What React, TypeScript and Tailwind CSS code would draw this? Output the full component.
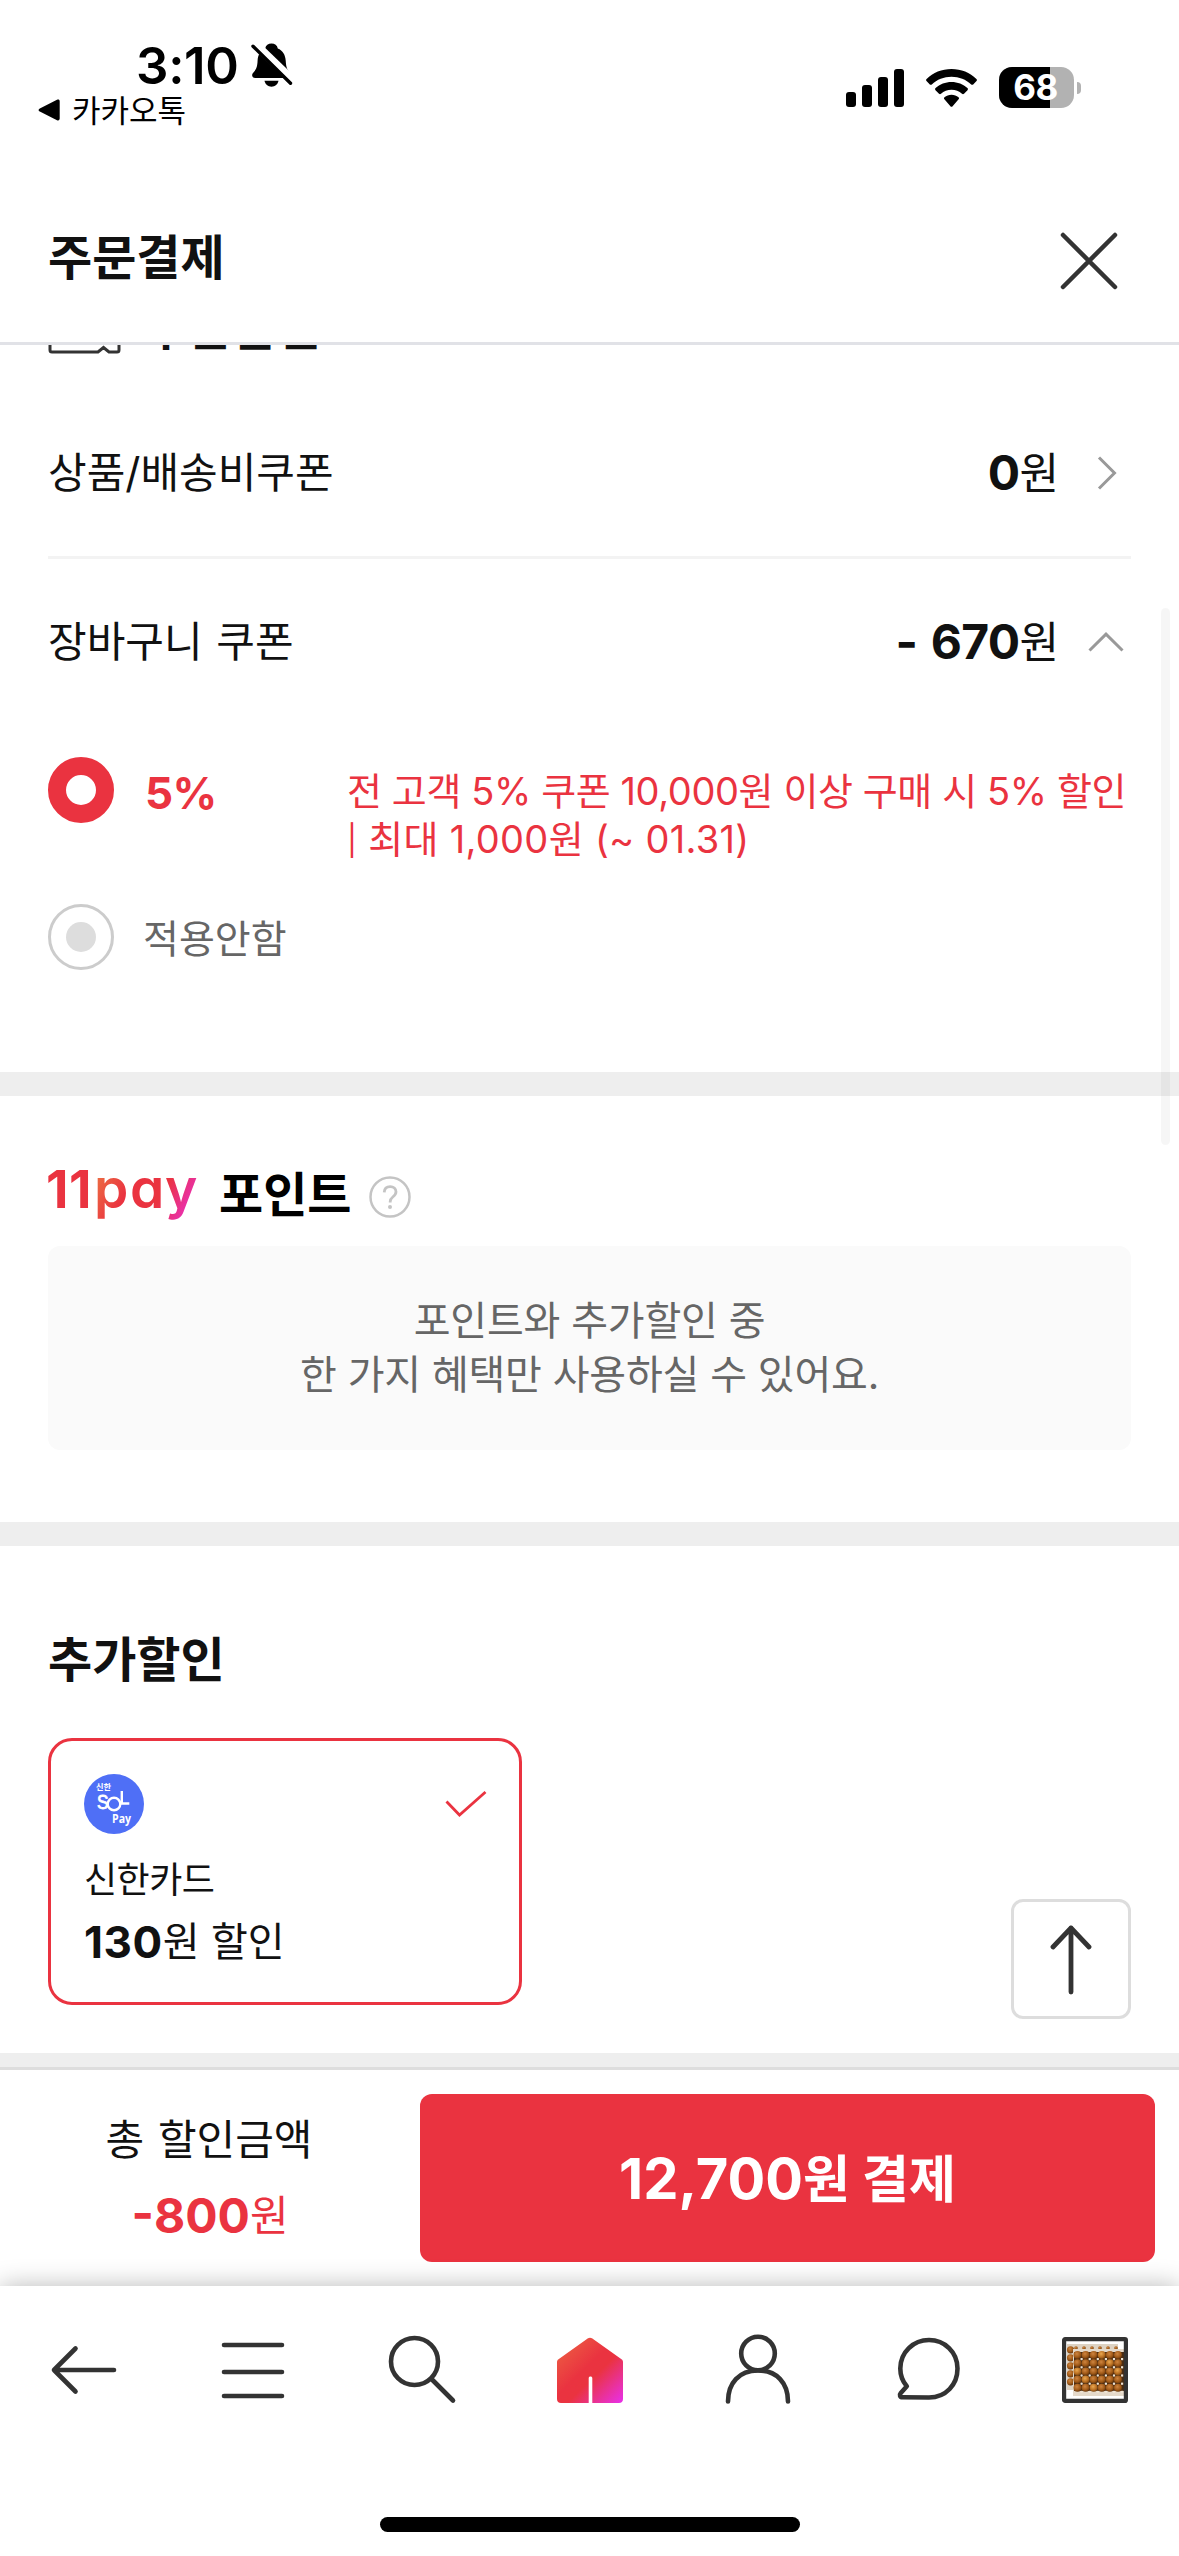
import { ReactNode } from 'react';

const BRAND = '#ea3340';
const INK = '#333333';

function StatusBar() {
  return (
    <div className="flex h-[172px] items-start justify-between pl-[38px] pr-[98px] text-black">
      <div>
        <div className="mt-[39px] flex h-[52px] items-center gap-[12px] pl-[98px]">
          <span className="text-[51px] font-semibold leading-none tracking-[-0.300px]">3:10</span>
          <svg width="42" height="44" viewBox="0 0 42 44">
            <path
              d="M20.5 0.5c3.3 0 5.7 1.9 6.3 4.9 5 2 7.600 6.500 7.900 12.200.4 7.400 1.800 9.600 4.600 12.700 1.700 2 .8 4.700-2 4.700H4.300c-3 0-4.100-2.700-2.300-4.900 2.900-3.300 4.300-5.300 4.600-12.500C6.900 11.800 9.400 7.300 14.200 5.400c.6-3 3-4.900 6.300-4.900z"
              fill="#000"
            />
            <path d="M13.500 37.800h14c-.7 3.600-3.500 5.900-7 5.900s-6.300-2.300-7-5.900z" fill="#000" />
            <path d="M3.500 0.500 43 38.500" stroke="#fff" strokeWidth="8.500" />
            <path d="M2 3.200 39.500 40.200" stroke="#000" strokeWidth="3.400" strokeLinecap="round" />
          </svg>
        </div>
        <div className="flex h-[38px] items-center gap-[11px]">
          <svg width="23" height="22" viewBox="0 0 23 22">
            <path d="M1.800 9.400 19 .8c1.600-.6 2.700 0 2.700 1.600v17.200c0 1.600-1.100 2.200-2.700 1.600L1.800 12.600c-1.600-.8-1.600-2.400 0-3.200z" fill="#000" />
          </svg>
          <span className="text-[31px] leading-none">카카오톡</span>
        </div>
      </div>

      <div className="mt-[67px] flex h-[41px] items-center">
        <svg width="59" height="38" viewBox="0 0 59 38" className="mr-[21px]">
          <rect x="0" y="23" width="10" height="15" rx="3" />
          <rect x="16" y="16" width="10" height="22" rx="3" />
          <rect x="32" y="8" width="10" height="30" rx="3" />
          <rect x="48" y="0" width="10" height="38" rx="3" />
        </svg>
        <svg width="51" height="38" viewBox="0 0 51 38" className="mr-[22px]">
          <path d="M25.500 0C35.200 0 44 3.700 50.400 9.900c.7.7.7 1.500.1 2.100L47.200 15.400c-.6.6-1.400.6-2 0C40 10.500 33.100 7.700 25.500 7.700S11 10.500 5.800 15.400c-.6.6-1.400.6-2 0L.5 12c-.6-.6-.6-1.400.1-2.100C7 3.700 15.800 0 25.500 0z" />
          <path d="M25.500 13c6.100 0 11.700 2.300 15.900 6.100.7.6.7 1.500.1 2.100l-3.500 3.500c-.6.6-1.300.6-2 .1-2.800-2.500-6.500-4-10.500-4s-7.700 1.500-10.500 4c-.7.5-1.400.5-2-.1l-3.500-3.500c-.6-.6-.6-1.500.1-2.100C13.800 15.300 19.400 13 25.500 13z" />
          <path d="M25.500 25.800c2.700 0 5.100.9 7 2.500.7.6.7 1.400.1 2l-6 6.900c-.6.7-1.600.7-2.200 0l-6-6.900c-.6-.6-.6-1.400.1-2 1.900-1.600 4.300-2.500 7-2.500z" />
        </svg>
        <div className="relative h-[41px] w-[75px] overflow-hidden rounded-[13px] bg-[#b2b2b2]">
          <div className="h-full w-[51px] bg-black" />
          <span className="absolute inset-0 flex items-center justify-center pr-[2px] text-[35px] font-bold leading-none tracking-[-0.5px] text-white">68</span>
        </div>
        <div className="ml-[3px] h-[12px] w-[4px] rounded-r-full bg-[#b2b2b2]" />
      </div>
    </div>
  );
}

function Header() {
  return (
    <header className="flex h-[173px] items-center justify-between border-b-[3px] border-[#e1e2e7] pl-[48px] pr-[61px]">
      <h1 className="pt-[2px] text-[48px] font-bold leading-none">주문결제</h1>
      <svg width="58" height="58" viewBox="0 0 58 58" className="mt-[8px]">
        <path d="M3 3 55 55M55 3 3 55" stroke={INK} strokeWidth="4.500" strokeLinecap="round" />
      </svg>
    </header>
  );
}

function CouponRow({ label, amount, children }: { label: string; amount: string; children: ReactNode }) {
  return (
    <div className="flex h-[166px] items-center">
      <span className="flex-1 text-[42px] leading-none [word-spacing:2px]">{label}</span>
      <span className="flex items-center leading-none">
        <b className="whitespace-pre text-[48px] font-bold tracking-[-0.700px] [word-spacing:3px]">{amount}</b>
        <span className="text-[43px]">원</span>
      </span>
      <span className="flex w-[72px] items-center justify-center pl-[24px]">{children}</span>
    </div>
  );
}

function CouponSection() {
  return (
    <section className="h-[727px] overflow-hidden px-[48px]">
      <div className="-mt-[42px] flex h-[48px] items-center">
        <svg width="73" height="52" viewBox="0 0 73 52" className="mr-[23px] mt-[4px]">
          <path
            d="M4 2h46l5 5 5-5h9c1.200 0 2 .8 2 2v43c0 1.200-.8 2-2 2h-8l-5.500-4.500L50 49H4c-1.200 0-2-.8-2-2V4c0-1.200.8-2 2-2z"
            fill="none"
            stroke={INK}
            strokeWidth="3"
          />
        </svg>
        <h2 className="pt-[1px] text-[48px] font-bold leading-none">쿠폰할인</h2>
      </div>

      <div className="mt-[39px] border-b-[3px] border-[#f3f3f3]">
        <CouponRow label="상품/배송비쿠폰" amount="0">
          <svg width="20" height="34" viewBox="0 0 20 34">
            <path d="M2 1.500 17.500 17 2 32.500" fill="none" stroke="#999" strokeWidth="3" />
          </svg>
        </CouponRow>
      </div>
      <CouponRow label="장바구니 쿠폰" amount="- 670">
        <svg width="36" height="20" viewBox="0 0 36 20" className="-ml-[3px]">
          <path d="M1.500 18.500 18 2.200 34.500 18.500" fill="none" stroke="#999" strokeWidth="3" />
        </svg>
      </CouponRow>

      <div className="mt-[32px] flex h-[66px] items-start text-[#ea3340]">
        <div className="h-[66px] w-[66px] rounded-full border-[18px] border-[#ea3340]" />
        <span className="ml-[31px] mt-[3px] w-[202px] text-[44px] font-bold leading-[66px] tracking-[-0.5px]">5%</span>
        <p className="mt-[10px] whitespace-nowrap text-[38px] leading-[48px] tracking-[-0.4px]">
          전 고객 5% 쿠폰 10,000원 이상 구매 시 5% 할인
          <br />
          <span className="tracking-[0.300px]">
            <span className="align-[2px] text-[30px] leading-none">|</span> 최대 1,000원 (~ 01.31)
          </span>
        </p>
      </div>
      <div className="mt-[81px] flex h-[66px] items-center">
        <div className="flex h-[66px] w-[66px] items-center justify-center rounded-full border-[3px] border-[#ccc]">
          <div className="h-[30px] w-[30px] rounded-full bg-[#ddd]" />
        </div>
        <span className="ml-[29px] mt-[3px] text-[39px] leading-none text-[#666]">적용안함</span>
      </div>
    </section>
  );
}

function PointSection() {
  return (
    <section className="h-[426px] px-[48px] pt-[60px]">
      <div className="mb-[14px] flex h-[76px] items-center">
        <svg width="156" height="60" viewBox="0 0 156 60" className="mr-[15px] overflow-visible" fontFamily="Inter">
          <defs>
            <linearGradient id="pay" gradientUnits="userSpaceOnUse" x1="52" y1="8" x2="148" y2="58">
              <stop offset="0" stopColor="#ec6a42" />
              <stop offset="0.3" stopColor="#ea3340" />
              <stop offset="0.6" stopColor="#ea3340" />
              <stop offset="1" stopColor="#e92fe0" />
            </linearGradient>
          </defs>
          <text x="-2 21" y="44" fontSize="52" fontWeight="700" fill={BRAND}>11</text>
          <text x="46 82 117" y="44" fontSize="55" fontWeight="600" fill="url(#pay)" style={{ fontFeatureSettings: '"cv11"' }}>pay</text>
        </svg>
        <h2 className="pt-[1px] text-[48px] font-bold leading-none text-black">포인트</h2>
        <svg width="42" height="42" viewBox="0 0 42 42" className="ml-[18px] mt-[6px]">
          <circle cx="21" cy="21" r="19.500" fill="none" stroke="#c4c4c4" strokeWidth="2.500" />
          <path d="M15.200 16.300c.2-3.600 2.600-5.700 6-5.700 3.300 0 5.800 2.100 5.800 5.200 0 2.300-1.100 3.600-3.200 5.200-2 1.500-2.600 2.500-2.600 4.700v.8" fill="none" stroke="#c4c4c4" strokeWidth="2.800" />
          <circle cx="21" cy="31" r="2" fill="#c4c4c4" />
        </svg>
      </div>
      <p className="flex h-[204px] items-center justify-center rounded-[12px] bg-[#fafafa] text-center text-[40px] leading-[54px] tracking-[-0.200px] text-[#666]">
        포인트와 추가할인 중
        <br />한 가지 혜택만 사용하실 수 있어요.
      </p>
    </section>
  );
}

function SolPayIcon() {
  return (
    <svg width="60" height="60" viewBox="0 0 60 60" fill="#fff">
      <circle cx="30" cy="30" r="30" fill="#4f6ff6" />
      <text x="12" y="15.500" fontSize="8.500" fontWeight="700" fontFamily="'Noto Sans CJK KR'" textLength="15" lengthAdjust="spacingAndGlyphs">신한</text>
      <text x="13" y="35" fontSize="19.500" stroke="#fff" strokeWidth="0.800" fontFamily="'Liberation Sans'" textLength="11.500" lengthAdjust="spacingAndGlyphs">S</text>
      <circle cx="30" cy="30" r="6.300" fill="none" stroke="#fff" strokeWidth="2.400" />
      <path d="M37.800 17v12.500h7.500" fill="none" stroke="#fff" strokeWidth="2.400" />
      <text x="28" y="48.500" fontSize="12" fontWeight="700" fontFamily="'Open Sans'" textLength="19" lengthAdjust="spacingAndGlyphs">Pay</text>
    </svg>
  );
}

function ExtraDiscountSection() {
  return (
    <section className="h-[507px] px-[48px] pt-[80px]">
      <h2 className="h-[68px] text-[48px] font-bold leading-[68px]">추가할인</h2>
      <div className="mt-[44px] h-[267px] w-[474px] rounded-[24px] border-[3px] border-[#ea3340] pl-[33px] pr-[32px] pt-[33px]">
        <div className="flex items-center justify-between">
          <SolPayIcon />
          <svg width="42" height="28" viewBox="0 0 42 28">
            <path d="M1.500 11.500 14.500 25 40.500 2" fill="none" stroke={BRAND} strokeWidth="2.800" />
          </svg>
        </div>
        <p className="mt-[19px] h-[54px] text-[36px] leading-[54px] tracking-[-0.500px]">신한카드</p>
        <p className="flex h-[70px] items-center leading-[70px]">
          <b className="text-[44px] font-bold tracking-[0.600px]">130</b>
          <span className="text-[40px]">원 할인</span>
        </p>
      </div>
    </section>
  );
}

function PayBar() {
  return (
    <div className="flex h-[219px] items-center border-t-[3px] border-[#ddd] bg-white">
      <div className="w-[420px] pr-[2px] text-center">
        <p className="h-[76px] text-[42px] leading-[75px] [word-spacing:2px]">총 할인금액</p>
        <p className="flex h-[76px] items-center justify-center pl-[2px] leading-[76px] text-[#ea3340]">
          <b className="text-[48px] font-bold">-800</b>
          <span className="text-[42px]">원</span>
        </p>
      </div>
      <button className="flex h-[168px] w-[735px] items-center justify-center rounded-[12px] bg-[#ea3340] pt-[2px] text-[51px] font-bold leading-none text-white">
        <span className="text-[56px]">12,700</span>
        <span className="whitespace-pre">원 결제</span>
      </button>
    </div>
  );
}

function EggTrays() {
  const eggs = [];
  for (let row = 0; row < 5; row++) {
    for (let col = 0; col < 6; col++) {
      eggs.push({ x: 15.5 + col * 8.1, y: 18 + row * 8.2, light: (row * 3 + col * 2) % 5 === 1 });
    }
  }
  return (
    <svg width="66" height="66" viewBox="0 0 66 66">
      <defs>
        <radialGradient id="egg" cx="0.42" cy="0.35" r="0.7">
          <stop offset="0" stopColor="#cf8540" />
          <stop offset="0.6" stopColor="#a05a18" />
          <stop offset="1" stopColor="#5e300a" />
        </radialGradient>
        <radialGradient id="eggLight" cx="0.42" cy="0.35" r="0.7">
          <stop offset="0" stopColor="#eaa850" />
          <stop offset="0.6" stopColor="#b96f22" />
          <stop offset="1" stopColor="#70400f" />
        </radialGradient>
      </defs>
      <rect x="2" y="2" width="62" height="62" fill="#fff" />
      <rect x="5" y="7" width="51" height="46" fill="#ddd2c2" />
      {[12, 20, 28, 36, 44].map((y) => (
        <circle key={y} cx="8.500" cy={y + 0.8} r="3.600" fill="url(#egg)" />
      ))}
      {[14, 22, 30, 38, 46, 54].map((x) => (
        <circle key={x} cx={x} cy="11" r="1.800" fill="url(#egg)" />
      ))}
      <rect x="11" y="12" width="52" height="47" fill="#e4d9ca" />
      <rect x="12" y="15" width="50" height="39" fill="#4a2d14" />
      {eggs.map((e, i) => (
        <rect key={i} x={e.x + 3} y={e.y + 3} width="2.200" height="2.200" fill="#eee3d3" />
      ))}
      {eggs.map((e, i) => (
        <circle key={i} cx={e.x} cy={e.y} r="4" fill={e.light ? 'url(#eggLight)' : 'url(#egg)'} />
      ))}
      <rect x="2.100" y="2.100" width="61.800" height="61.800" rx="1" fill="none" stroke={INK} strokeWidth="4.200" />
    </svg>
  );
}

function NavIcon({ children }: { children: ReactNode }) {
  return (
    <svg width="66" height="66" viewBox="0 0 66 66" fill="none" stroke={INK} strokeWidth="4.600" strokeLinecap="round" strokeLinejoin="round" className="overflow-visible">
      {children}
    </svg>
  );
}

function BottomNav() {
  return (
    <nav className="relative h-[270px] bg-white shadow-[0_0_24px_rgba(0,0,0,0.28)]">
      <div className="flex justify-between px-[51px] pt-[51px]">
        <NavIcon>
          <path d="M63 33H3M24.500 11.500 3 33l21.500 21.500" />
        </NavIcon>
        <NavIcon>
          <path d="M4 8h58M4 35h58M4 59h58" />
        </NavIcon>
        <NavIcon>
          <circle cx="26.500" cy="24.500" r="23.500" />
          <path d="M43.500 42 65 63.500" />
        </NavIcon>
        <NavIcon>
          <defs>
            <linearGradient id="home" gradientUnits="userSpaceOnUse" x1="6" y1="8" x2="62" y2="66">
              <stop offset="0" stopColor="#ec5a42" />
              <stop offset="0.4" stopColor="#ea3340" />
              <stop offset="0.550" stopColor="#ea3340" />
              <stop offset="1" stopColor="#e830e0" />
            </linearGradient>
          </defs>
          <path
            d="M31 1.300c1.200-.7 2.800-.7 4 0l29.500 21c1 .7 1.500 1.700 1.500 2.900V62c0 2.500-1.500 4-4 4H35.300V41c0-1-.8-1.600-1.800-1.600s-1.800.6-1.800 1.600v25H4c-2.500 0-4-1.500-4-4V25.200c0-1.200.5-2.200 1.500-2.900z"
            fill="url(#home)"
            stroke="none"
          />
        </NavIcon>
        <NavIcon>
          <circle cx="33" cy="16.500" r="16.800" />
          <path d="M3 64.500C3 46 14 33.500 33 33.500S63 46 63 64.500" />
        </NavIcon>
        <NavIcon>
          <path d="M35 60.500c17 0 28.500-13 28.500-29C63.500 15 50.500 3 35 3S6.300 15 6.300 31.500c0 7 2.400 13 6.500 17.800L6.800 56c-1.700 2-.8 4.300 1.700 4.300z" />
        </NavIcon>
        <EggTrays />
      </div>
      <div className="mx-auto mt-[114px] h-[15px] w-[420px] rounded-full bg-black" />
    </nav>
  );
}

export default function App() {
  return (
    <div className="relative h-[2556px] w-[1179px] overflow-hidden bg-white font-['Inter','Noto_Sans_CJK_KR',sans-serif] text-[#111]">
      <StatusBar />
      <Header />
      <CouponSection />
      <div className="h-[24px] bg-[#eeeeee]" />
      <PointSection />
      <div className="h-[24px] bg-[#eeeeee]" />
      <ExtraDiscountSection />
      <div className="h-[14px] bg-[#eeeeee]" />
      <PayBar />
      <BottomNav />

      {/* Scroll to top */}
      <button className="absolute right-[48px] top-[1899px] flex h-[120px] w-[120px] items-center justify-center rounded-[12px] border-[3px] border-[#ddd] bg-white pt-[2px]">
        <svg width="42" height="70" viewBox="0 0 42 70" fill="none" stroke={INK} strokeWidth="4.800" strokeLinecap="round" strokeLinejoin="round">
          <path d="M21 67V3M3 22 21 3l18 19" />
        </svg>
      </button>
      {/* Scroll indicator */}
      <div className="absolute right-[9px] top-[608px] h-[537px] w-[9px] rounded-full bg-black/[0.035]" />
    </div>
  );
}
